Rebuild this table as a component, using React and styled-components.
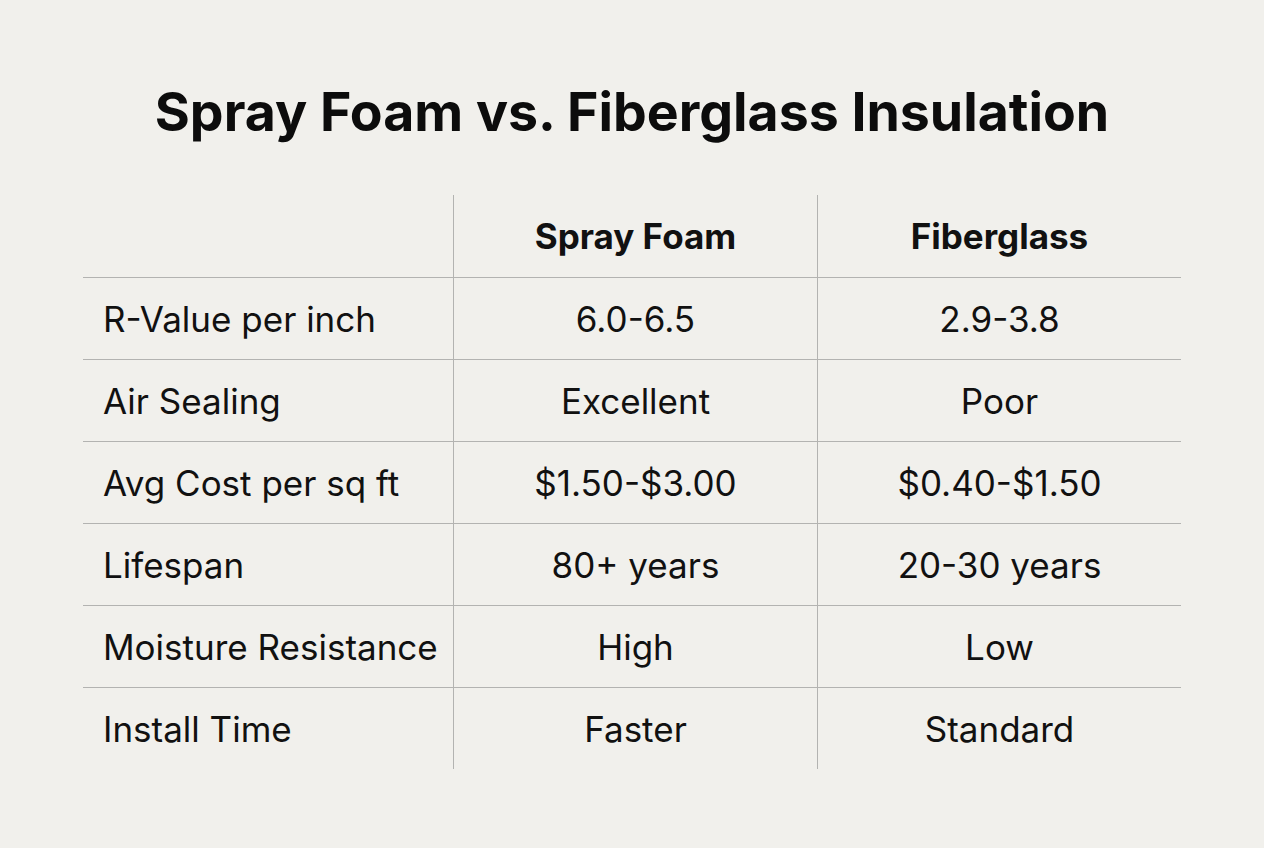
import React from "react";
import styled, { createGlobalStyle } from "styled-components";

const Global = createGlobalStyle`
  html, body { margin: 0; padding: 0; background: #f1f0ec; }
  body { font-family: Inter, "Liberation Sans", sans-serif; color: #111; }
`;

const Page = styled.div`
  width: 1264px;
  height: 848px;
  display: flex;
  flex-direction: column;
  align-items: center;
  box-sizing: border-box;
  padding-top: 78px;
`;

const Title = styled.h1`
  margin: 0;
  font-size: 53.6px;
  line-height: 68px;
  font-weight: 700;
  letter-spacing: 0;
  color: #0c0c0c;
`;

const Table = styled.div`
  margin-top: 49px;
  width: 1098px;
  display: flex;
  flex-direction: column;
`;

const Row = styled.div`
  display: grid;
  grid-template-columns: 370px 364px 364px;
  height: 82px;
  border-top: ${(p) => (p.$divider ? "1px solid #b3b3b1" : "none")};
  box-sizing: border-box;
`;

const Cell = styled.div`
  display: flex;
  align-items: center;
  justify-content: ${(p) => (p.$label ? "flex-start" : "center")};
  padding-left: ${(p) => (p.$label ? "20px" : "0")};
  border-left: ${(p) => (p.$label ? "none" : "1px solid #b3b3b1")};
  font-size: 35px;
  font-weight: ${(p) => (p.$head ? 700 : 400)};
  color: #111;
  white-space: nowrap;
`;

const rows = [
  ["R-Value per inch", "6.0-6.5", "2.9-3.8"],
  ["Air Sealing", "Excellent", "Poor"],
  ["Avg Cost per sq ft", "$1.50-$3.00", "$0.40-$1.50"],
  ["Lifespan", "80+ years", "20-30 years"],
  ["Moisture Resistance", "High", "Low"],
  ["Install Time", "Faster", "Standard"],
];

export default function App() {
  return (
    <>
      <Global />
      <Page>
        <Title>Spray Foam vs. Fiberglass Insulation</Title>
        <Table>
          <Row>
            <Cell $label />
            <Cell $head>Spray Foam</Cell>
            <Cell $head>Fiberglass</Cell>
          </Row>
          {rows.map((r) => (
            <Row key={r[0]} $divider>
              <Cell $label>{r[0]}</Cell>
              <Cell>{r[1]}</Cell>
              <Cell>{r[2]}</Cell>
            </Row>
          ))}
        </Table>
      </Page>
    </>
  );
}
